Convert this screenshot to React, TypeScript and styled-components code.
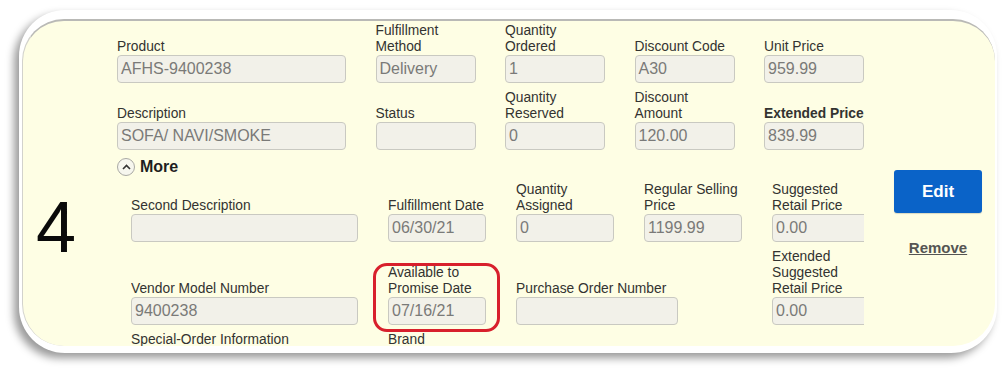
import React from 'react';
import styled, { createGlobalStyle } from 'styled-components';

const GlobalStyle = createGlobalStyle`
  html, body {
    margin: 0;
    padding: 0;
    background: #ffffff;
  }
  body {
    width: 1005px;
    height: 375px;
    overflow: hidden;
    font-family: "Liberation Sans", Arial, sans-serif;
  }
`;

const Card = styled.div`
  box-sizing: border-box;
  margin: 10px 0 0 19px;
  width: 978px;
  height: 343px;
  padding: 9px 2px 7px 3px;
  background: #ffffff;
  border-radius: 46px;
  box-shadow: -5px 5px 8px rgba(0, 0, 0, 0.4);
`;

const Screen = styled.div`
  box-sizing: border-box;
  height: 100%;
  background: #fefee4;
  border-top: 2px solid #b9b9b6;
  border-left: 1px solid #d2d2cc;
  border-radius: 42px;
  overflow: hidden;
`;

const LineItem = styled.div`
  display: flex;
  align-items: flex-start;
`;

const IndexCol = styled.div`
  box-sizing: border-box;
  width: 108px;
  flex: none;
  padding: 170px 0 0 13px;
  font-size: 72px;
  line-height: 72px;
  color: #0a0a0a;
`;

const MainCol = styled.div`
  width: 733px;
  flex: none;
  padding-top: 2px;
`;

const TopGrid = styled.div`
  display: grid;
  grid-template-columns: 229px 100px 100px 100px 100px;
  column-gap: 29.5px;
  row-gap: 7px;
  margin-left: -14px;
`;

const DetailsClip = styled.div`
  overflow: hidden;
  margin-top: 5px;
`;

const DetailsGrid = styled.div`
  display: grid;
  grid-template-columns: 227px 98px 98px 98px 98px;
  column-gap: 30px;
  row-gap: 7px;
  width: 739px;
`;

const Field = styled.div<{ $span?: number; $highlight?: boolean }>`
  position: relative;
  display: flex;
  flex-direction: column;
  justify-content: flex-end;
  grid-column: span ${p => p.$span ?? 1};
  align-self: ${p => (p.$highlight ? 'end' : 'stretch')};

  ${p =>
    p.$highlight &&
    `
    &::after {
      content: '';
      position: absolute;
      top: -2px;
      bottom: -7px;
      left: -15px;
      right: -14px;
      border: 3px solid #d8202c;
      border-radius: 14px;
      pointer-events: none;
    }
  `}
`;

const Label = styled.div<{ $bold?: boolean }>`
  font-size: 13.8px;
  line-height: 16px;
  color: #333331;
  font-weight: ${p => (p.$bold ? 700 : 400)};
  white-space: nowrap;
`;

const Input = styled.div<{ $width?: number }>`
  box-sizing: border-box;
  height: 28px;
  width: ${p => (p.$width ? `${p.$width}px` : '100%')};
  padding: 0 3px;
  border: 1px solid #c9c9c1;
  border-radius: 4px;
  background: #f2f1e9;
  font-size: 16px;
  line-height: 26px;
  color: #7a7a78;
  white-space: nowrap;
`;

const MoreToggle = styled.div`
  display: flex;
  align-items: center;
  gap: 5px;
  height: 20px;
  margin: 7px 0 0 -14px;
  font-size: 16px;
  font-weight: 700;
  color: #1e1e1e;
`;

const CircleIcon = styled.span`
  box-sizing: border-box;
  display: flex;
  align-items: center;
  justify-content: center;
  width: 18px;
  height: 18px;
  border: 1.5px solid #a9a9a4;
  border-radius: 50%;
  background: #f6f6ee;
`;

const Actions = styled.div`
  width: 88px;
  flex: none;
  margin-left: 30px;
  padding-top: 149px;
  display: flex;
  flex-direction: column;
  align-items: center;
`;

const EditButton = styled.button`
  width: 88px;
  height: 43px;
  border: none;
  border-radius: 3px;
  background: #0a63c8;
  color: #ffffff;
  font-family: "Liberation Sans", Arial, sans-serif;
  font-size: 17px;
  font-weight: 700;
  box-shadow: 0 1px 1px rgba(0, 0, 0, 0.15);
`;

const RemoveLink = styled.a`
  margin-top: 26px;
  font-size: 15px;
  line-height: 18px;
  font-weight: 700;
  color: #555553;
  text-decoration: underline;
`;

type FieldProps = {
  label: React.ReactNode;
  value?: string;
  span?: number;
  width?: number;
  bold?: boolean;
  highlight?: boolean;
};

const FormField = ({ label, value = '', span, width, bold, highlight }: FieldProps) => (
  <Field $span={span} $highlight={highlight}>
    <Label $bold={bold}>{label}</Label>
    <Input $width={width}>{value}</Input>
  </Field>
);

const App = () => {
  return (
    <>
      <GlobalStyle />
      <Card>
        <Screen>
          <LineItem>
            <IndexCol>4</IndexCol>

            <MainCol>
              <TopGrid>
                <FormField label="Product" value="AFHS-9400238" />
                <FormField label={<>Fulfillment<br />Method</>} value="Delivery" />
                <FormField label={<>Quantity<br />Ordered</>} value="1" />
                <FormField label="Discount Code" value="A30" />
                <FormField label="Unit Price" value="959.99" />

                <FormField label="Description" value="SOFA/ NAVI/SMOKE" />
                <FormField label="Status" />
                <FormField label={<>Quantity<br />Reserved</>} value="0" />
                <FormField label={<>Discount<br />Amount</>} value="120.00" />
                <FormField label="Extended Price" value="839.99" bold />
              </TopGrid>

              <MoreToggle>
                <CircleIcon>
                  <svg width="9" height="6" viewBox="0 0 9 6">
                    <polyline points="1,5 4.5,1.5 8,5" fill="none" stroke="#333" strokeWidth="1.6" />
                  </svg>
                </CircleIcon>
                More
              </MoreToggle>

              <DetailsClip>
                <DetailsGrid>
                  <FormField label="Second Description" />
                  <FormField label="Fulfillment Date" value="06/30/21" />
                  <FormField label={<>Quantity<br />Assigned</>} value="0" />
                  <FormField label={<>Regular Selling<br />Price</>} value="1199.99" />
                  <FormField label={<>Suggested<br />Retail Price</>} value="0.00" />

                  <FormField label="Vendor Model Number" value="9400238" />
                  <FormField label={<>Available to<br />Promise Date</>} value="07/16/21" highlight />
                  <FormField label="Purchase Order Number" span={2} width={162} />
                  <FormField label={<>Extended<br />Suggested<br />Retail Price</>} value="0.00" />

                  <FormField label="Special-Order Information" />
                  <FormField label="Brand" />
                </DetailsGrid>
              </DetailsClip>
            </MainCol>

            <Actions>
              <EditButton>Edit</EditButton>
              <RemoveLink>Remove</RemoveLink>
            </Actions>
          </LineItem>
        </Screen>
      </Card>
    </>
  );
};

export default App;
